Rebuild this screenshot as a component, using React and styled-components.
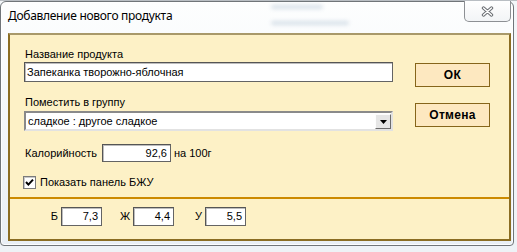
import React from 'react';
import styled, { createGlobalStyle } from 'styled-components';

const Global = createGlobalStyle`
  html, body { margin: 0; padding: 0; }
  body {
    width: 517px; height: 252px; overflow: hidden;
    background: #eef2f6;
    font-family: "Liberation Sans", Arial, sans-serif;
  }
`;

const Screen = styled.div`
  width: 517px; height: 252px; box-sizing: border-box;
  padding-top: 1px;
  background: linear-gradient(180deg, #b9bec3 0px, #b9bec3 1px, #f3f6f9 1px, #eef2f6 100%);
`;

const Window = styled.div`
  width: 514px; height: 245px; box-sizing: border-box;
  border: 1px solid #707579;
  border-radius: 6px 6px 4px 4px;
  background: linear-gradient(180deg, #fdfefe 0%, #f1f5f9 60%, #e9eff5 100%);
  box-shadow: inset 0 0 0 1px rgba(255,255,255,0.85);
  display: flex; flex-direction: column;
`;

const TitleBar = styled.div`
  height: 31px; flex: none;
  display: flex; align-items: flex-start;
  position: relative;
`;

const Title = styled.div`
  padding: 6px 0 0 7px;
  font-family: "Noto Sans", "Open Sans", sans-serif;
  font-size: 12px; line-height: 16px; letter-spacing: -0.3px; color: #000;
`;

const Glass = styled.div`
  position: absolute;
  left: ${p => p.$x}px; top: ${p => p.$y}px;
  width: ${p => p.$w}px; height: 4px;
  background: #7f9cb8; opacity: 0.3; filter: blur(2px);
  border-radius: 2px;
`;

const CloseButton = styled.div`
  margin: -1px 2px 0 auto;
  width: 47px; height: 21px; box-sizing: border-box;
  border: 1px solid #8d9094; border-top: none;
  border-radius: 0 0 5px 5px;
  background: linear-gradient(180deg, #ffffff 0%, #f2f4f6 100%);
  display: flex; align-items: center; justify-content: center;
  padding-top: 1px;
`;

const Panel = styled.div`
  margin: 0 2px 4px 7px;
  width: 503px; height: 208px; box-sizing: border-box;
  border: 2px solid #8b6d22; border-top-color: #a8996a;
  background: #fdf1c6;
  display: flex; flex-direction: column;
`;

const TopSection = styled.div`
  height: 164px; flex: none; box-sizing: border-box;
  border-bottom: 2px solid #cc8a00;
  display: flex;
`;

const FormColumn = styled.div`
  width: 383px; box-sizing: border-box;
  padding: 13px 0 0 14px;
  display: flex; flex-direction: column;
`;

const Label = styled.div`
  font-size: 11px; line-height: 13px; height: 13px; color: #000;
  margin: ${p => p.$mt || 0}px 0 0 1px;
  white-space: nowrap;
`;

const TextBox = styled.div`
  box-sizing: border-box;
  width: ${p => p.$w}px; height: ${p => p.$h}px;
  margin-top: ${p => p.$mt || 0}px;
  border: 1px solid #646464;
  border-top-color: #555; border-left-color: #555;
  box-shadow: inset 1px 1px 0 #bdbdbd;
  background: #fff;
  font-size: 11px; line-height: ${p => p.$h - 2}px;
  padding: 0 ${p => (p.$right ? 3 : 2)}px 0 2px;
  text-align: ${p => (p.$right ? 'right' : 'left')};
  color: #000; white-space: nowrap; overflow: hidden;
`;

const Combo = styled.div`
  box-sizing: border-box;
  width: 369px; height: 20px; margin-top: 2px;
  border: 2px solid;
  border-color: #8a8a8a #e2e2e2 #e2e2e2 #8a8a8a;
  background: #fff;
  display: flex; align-items: center;
`;

const ComboText = styled.div`
  flex: 1; padding-left: 2px;
  font-size: 11px; line-height: 16px; color: #000;
`;

const ComboArrow = styled.div`
  width: 16px; height: 15px; box-sizing: border-box;
  margin-top: 1px;
  background: #e6e6e6;
  border: 1px solid; border-color: #fdfdfd #6c6c6c #6c6c6c #fdfdfd;
  display: flex; align-items: center; justify-content: center;
`;

const Row = styled.div`
  display: flex; align-items: center;
  margin-top: ${p => p.$mt || 0}px;
  font-size: 11px; color: #000;
`;

const CalLabel = styled.div`
  width: 77px; margin-left: 1px; line-height: 13px;
`;

const Unit = styled.div`
  margin-left: 3px; line-height: 13px;
`;

const CheckBox = styled.div`
  width: 13px; height: 13px; box-sizing: border-box;
  margin-left: -1px;
  border: 1px solid #7b7b7b;
  box-shadow: inset 1px 1px 0 #c9c9c9;
  background: #fff;
  display: flex; align-items: center; justify-content: center;
`;

const CheckLabel = styled.div`
  margin-left: 4px; line-height: 13px;
`;

const ButtonColumn = styled.div`
  padding: 28px 0 0 22px;
  display: flex; flex-direction: column; gap: 16px;
`;

const Button = styled.div`
  width: 75px; height: 24px; box-sizing: border-box;
  border: 1px solid #86651a;
  background: #fde8c0;
  display: flex; align-items: center; justify-content: center;
  font-size: 12px; font-weight: bold; letter-spacing: 0.3px; color: #000;
`;

const BottomSection = styled.div`
  flex: 1;
  padding: 8px 0 0 38px;
  display: flex; align-items: flex-start; gap: 18px;
`;

const Field = styled.div`
  display: flex; align-items: center;
`;

const FieldLabel = styled.div`
  width: 10px; margin-right: 3px; text-align: right;
  font-size: 11px; line-height: 13px; color: #000;
`;

const CloseGlyph = () => (
  <svg width="13" height="11" viewBox="0 0 13 11">
    <path d="M2.5 2 L10.5 9 M10.5 2 L2.5 9" stroke="#6a6e73" strokeWidth="3.4" strokeLinecap="round" fill="none" />
    <path d="M2.5 2 L10.5 9 M10.5 2 L2.5 9" stroke="#ffffff" strokeWidth="1.4" strokeLinecap="round" fill="none" />
  </svg>
);

const Check = () => (
  <svg width="9" height="9" viewBox="0 0 9 9">
    <path d="M1 4 L3.4 6.6 L8 1.6" stroke="#000" strokeWidth="2" fill="none" />
  </svg>
);

const Triangle = () => (
  <svg width="7" height="4" viewBox="0 0 7 4">
    <path d="M0 0 H7 L3.5 4 Z" fill="#000" />
  </svg>
);

export default function App() {
  const macros = [
    { label: 'Б', value: '7,3' },
    { label: 'Ж', value: '4,4' },
    { label: 'У', value: '5,5' },
  ];
  return (
    <Screen>
      <Global />
      <Window>
        <TitleBar>
          <Title>Добавление нового продукта</Title>
          <Glass $x={270} $y={3} $w={52} />
          <Glass $x={270} $y={19} $w={78} />
          <CloseButton><CloseGlyph /></CloseButton>
        </TitleBar>
        <Panel>
          <TopSection>
            <FormColumn>
              <Label>Название продукта</Label>
              <TextBox $w={369} $h={20} $mt={1}>Запеканка творожно-яблочная</TextBox>
              <Label $mt={14}>Поместить в группу</Label>
              <Combo>
                <ComboText>сладкое : другое сладкое</ComboText>
                <ComboArrow><Triangle /></ComboArrow>
              </Combo>
              <Row $mt={13}>
                <CalLabel>Калорийность</CalLabel>
                <TextBox $w={69} $h={18} $right>92,6</TextBox>
                <Unit>на 100г</Unit>
              </Row>
              <Row $mt={14}>
                <CheckBox><Check /></CheckBox>
                <CheckLabel>Показать панель БЖУ</CheckLabel>
              </Row>
            </FormColumn>
            <ButtonColumn>
              <Button>ОК</Button>
              <Button>Отмена</Button>
            </ButtonColumn>
          </TopSection>
          <BottomSection>
            {macros.map(m => (
              <Field key={m.label}>
                <FieldLabel>{m.label}</FieldLabel>
                <TextBox $w={41} $h={19} $right>{m.value}</TextBox>
              </Field>
            ))}
          </BottomSection>
        </Panel>
      </Window>
    </Screen>
  );
}
